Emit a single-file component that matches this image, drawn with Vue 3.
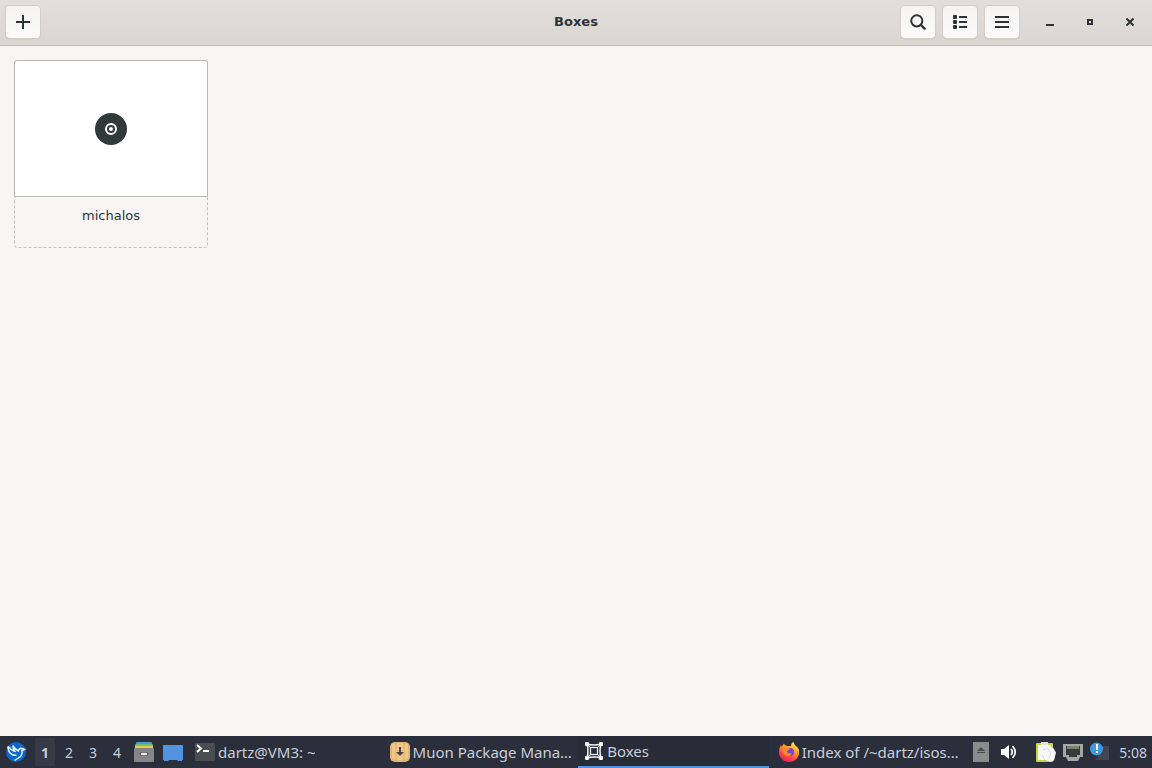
<script setup>
import { ref } from 'vue';

const activeDesktop = ref(1);
const activeTask = ref('boxes');

const tasks = [
    { id: 'terminal', title: 'dartz@VM3: ~' },
    { id: 'muon', title: 'Muon Package Mana…' },
    { id: 'boxes', title: 'Boxes' },
    { id: 'firefox', title: 'Index of /~dartz/isos…' },
];
</script>

<template>
    <div class="desktop">
        <header class="headerbar">
            <div class="side">
                <button class="tool" aria-label="New">
                    <svg width="16" height="16" viewBox="0 0 16 16">
                        <path d="M8 1v14M1 8h14" stroke="#2e3436" stroke-width="2" />
                    </svg>
                </button>
            </div>
            <h1>Boxes</h1>
            <div class="side end">
                <button class="tool" aria-label="Search">
                    <svg width="16" height="16" viewBox="0 0 16 16" fill="none" stroke="#2e3436">
                        <circle cx="6.8" cy="6.8" r="5.6" stroke-width="2" />
                        <path d="M11 11l3.6 3.6" stroke-width="2.4" stroke-linecap="round" />
                    </svg>
                </button>
                <button class="tool" aria-label="List view">
                    <svg width="16" height="16" viewBox="0 0 16 16" fill="#2e3436">
                        <rect x="1" y="1" width="4" height="4" rx="1" />
                        <rect x="1" y="6" width="4" height="4" rx="1" />
                        <rect x="1" y="11" width="4" height="4" rx="1" />
                        <path d="M7 2h8v2H7zM7 7h8v2H7zM7 12h8v2H7z" />
                    </svg>
                </button>
                <button class="tool" aria-label="Menu">
                    <svg width="16" height="16" viewBox="0 0 16 16" fill="#2e3436">
                        <path d="M1 2h14v2H1zM1 7h14v2H1zM1 12h14v2H1z" />
                    </svg>
                </button>
                <div class="window-controls">
                    <button aria-label="Minimize">
                        <svg width="16" height="16" viewBox="0 0 16 16" fill="#2e3436">
                            <path d="M4 10h8v2H4z" />
                        </svg>
                    </button>
                    <button aria-label="Maximize">
                        <svg width="16" height="16" viewBox="0 0 16 16" fill="none">
                            <rect x="6" y="6" width="4" height="4" stroke="#2e3436" stroke-width="2" />
                        </svg>
                    </button>
                    <button aria-label="Close">
                        <svg width="16" height="16" viewBox="0 0 16 16" fill="none">
                            <path d="M4.5 4.5l7 7M11.5 4.5l-7 7" stroke="#2e3436" stroke-width="2.1" />
                        </svg>
                    </button>
                </div>
            </div>
        </header>

        <main>
            <button class="machine">
                <span class="preview">
                    <svg width="32" height="32" viewBox="0 0 32 32">
                        <circle cx="16" cy="16" r="16" fill="#323a39" />
                        <circle cx="16" cy="16" r="5" fill="none" stroke="#fff" stroke-width="2" />
                        <circle cx="16" cy="16" r="2" fill="#fff" />
                    </svg>
                </span>
                <span class="name">michalos</span>
            </button>
        </main>

        <footer class="panel">
            <button class="start" aria-label="Applications">
                <svg width="22" height="22" viewBox="0 0 22 22">
                    <circle cx="11" cy="11" r="10" fill="#0b66cc" />
                    <path d="M3 5.5c2 2.5 4.500 4 7 5C8.500 9 8 7 8 5c1.500 2.500 3 4 5.500 5 .3-2 1.500-3 3.500-2.500l3 1-3 .8c.5 3.700-1 6.700-4.500 8.200l-3 2" fill="none" stroke="#e8f5ff" stroke-width="1.5" stroke-linejoin="round" />
                    <path d="M3 5.5c0 3.500 1.500 6.500 4 8 1.500.8 3 1 4.500.5" fill="none" stroke="#e8f5ff" stroke-width="1.5" />
                </svg>
            </button>
            <nav class="desktops">
                <button
                    v-for="n in 4"
                    :key="n"
                    :class="{ active: n == activeDesktop }"
                    @click="activeDesktop = n"
                >{{ n }}</button>
            </nav>
            <div class="launchers">
                <button aria-label="Files">
                    <svg width="20" height="20" viewBox="0 0 20 20">
                        <rect x="2" y="0" width="16" height="4" rx="1" fill="#4a9ad0" />
                        <rect x="1" y="2" width="18" height="4" rx="1" fill="#6cc074" />
                        <rect x="1" y="4" width="18" height="5" rx="1" fill="#f0c850" />
                        <rect x="0" y="6" width="20" height="14" rx="1" fill="#858585" />
                        <rect x="5" y="10" width="10" height="4" rx="2" fill="#707070" />
                        <rect x="7" y="11" width="6" height="2" fill="#fff" />
                    </svg>
                </button>
                <button aria-label="Show desktop">
                    <svg width="20" height="20" viewBox="0 0 20 20">
                        <path d="M0 3h20v15h-1v1h-4l-1-1H6l-1 1H1v-1H0z" fill="#5294e2" />
                    </svg>
                </button>
            </div>

            <div class="tasks">
                <button
                    v-for="task in tasks"
                    :key="task.id"
                    :class="{ active: task.id == activeTask }"
                    @click="activeTask = task.id"
                >
                    <svg v-if="task.id == 'terminal'" width="20" height="20" viewBox="0 0 20 20">
                        <rect y="1" width="20" height="18" rx="1" fill="#4b4d50" />
                        <path d="M2 3l4 3.5L2 10" fill="none" stroke="#fff" stroke-width="2" />
                        <path d="M8 8h6v2H8z" fill="#fff" />
                    </svg>
                    <svg v-else-if="task.id == 'muon'" width="20" height="20" viewBox="0 0 20 20">
                        <rect width="20" height="20" rx="5" fill="#e2b573" />
                        <rect x="2" y="1" width="16" height="17" rx="4" fill="#efc98c" />
                        <path d="M6 1v17M14 1v17" stroke="#dda962" />
                        <path d="M9 5h2v5h3l-4 4-4-4h3z" fill="#4c4036" />
                    </svg>
                    <svg v-else-if="task.id == 'boxes'" width="20" height="20" viewBox="0 0 20 20" fill="none" stroke="#f4f5f6">
                        <path d="M3 3q7 2 14 0q-2 7 0 14q-7-2-14 0q2-7 0-14z" stroke-width="1.5" />
                        <path d="M3 3l3 3M17 3l-3 3M3 17l3-3M17 17l-3-3" stroke-width="1.2" />
                        <rect x="6.5" y="6.5" width="7" height="7" stroke-width="1.2" />
                        <g fill="#f4f5f6" stroke="none">
                            <rect x="1" y="1" width="4" height="4" rx="1" />
                            <rect x="15" y="1" width="4" height="4" rx="1" />
                            <rect x="1" y="15" width="4" height="4" rx="1" />
                            <rect x="15" y="15" width="4" height="4" rx="1" />
                        </g>
                    </svg>
                    <svg v-else width="20" height="20" viewBox="0 0 20 20">
                        <defs>
                            <linearGradient id="flame" x1="0.8" y1="0" x2="0.3" y2="1">
                                <stop offset="0" stop-color="#fff04a" />
                                <stop offset="0.4" stop-color="#ff9a2c" />
                                <stop offset="0.75" stop-color="#ff4048" />
                                <stop offset="1" stop-color="#e42068" />
                            </linearGradient>
                        </defs>
                        <path d="M0 10C0 7 .8 5 2 3l.5 2L5 1.5C5.5 3 6.5 3.5 8 4l4 0c0-2 1-3.500 2.5-4 .3 2 1.500 3 3 4.500C19.5 6 21 9 20 12c-1 5-5 8-10 8S0 16 0 10z" fill="url(#flame)" />
                        <circle cx="11" cy="10" r="4" fill="#7446d0" />
                        <path d="M4 6c3-1.500 5-.5 7 1.500-1.500.2-2 .8-3 1.500 0 2 2 3 5 2-1 3-4 4-6.500 2.500S3.500 9 4 6z" fill="#ff8a2c" />
                    </svg>
                    <span>{{ task.title }}</span>
                </button>
            </div>

            <div class="tray">
                <button aria-label="Removable media">
                    <svg width="16" height="20" viewBox="0 0 16 20">
                        <rect width="16" height="20" fill="#8b8c8e" />
                        <path d="M4 9l4-4 4 4zM4 10h8v1H4z" fill="#494b4e" />
                    </svg>
                </button>
                <button class="volume" aria-label="Volume">
                    <svg width="16" height="16" viewBox="0 0 16 16">
                        <path d="M0 5h3l5-4v14l-5-4H0z" fill="#fff" />
                        <path d="M10 5q2.5 3 0 6M11.5 2q5.5 6 0 12" fill="none" stroke="#fff" stroke-width="1.7" />
                    </svg>
                </button>
                <button aria-label="Clipboard">
                    <svg width="20" height="20" viewBox="0 0 20 20">
                        <rect x="0" y="1" width="17" height="19" rx="1" fill="#c8d348" />
                        <rect x="2" y="3" width="13" height="15" fill="#f6f7ee" />
                        <rect x="5" y="0" width="7" height="3" fill="#e4e5da" />
                        <path d="M7 8l5-2 5-.5 3 5-2 8-4 1-6-2-2-5z" fill="#f8f8f8" />
                        <path d="M7 8l5-2M12 7l3 4-2 5M6 13l3 5" fill="none" stroke="#cfd0ce" stroke-width="0.8" />
                    </svg>
                </button>
                <button aria-label="Network">
                    <svg width="20" height="20" viewBox="0 0 20 20">
                        <path d="M0 2h20v13h-3l-2 4H5l-2-4H0z" fill="#a5a6a6" />
                        <path d="M3 4h14v9h-3v2H6v-2H3z" fill="#363a39" />
                        <path d="M5 4v3M7 4v3M9 4v3M11 4v3M13 4v3M15 4v3" stroke="#c4c3a0" />
                    </svg>
                </button>
                <button aria-label="Notifications">
                    <svg width="20" height="20" viewBox="0 0 20 20">
                        <path d="M8 4h11v14H5l3-3z" fill="#414650" />
                        <circle cx="6.5" cy="7" r="6.5" fill="#3d9ae0" />
                        <path d="M6 2h2v6H6zM6 9h2v2H6z" fill="#fff" />
                    </svg>
                </button>
                <time>5:08</time>
            </div>
        </footer>
    </div>
</template>

<style>
body {
    margin: 0;
}
</style>

<style scoped>
.desktop {
    min-height: 100vh;

    display: flex;
    flex-direction: column;

    background-color: #f6f5f4;
    color: #2e3436;
    font-family: "DejaVu Sans", sans-serif;
    font-size: 13px;
}

button {
    padding: 0;
    border: none;

    display: flex;
    align-items: center;
    justify-content: center;

    background: none;
    color: inherit;
    font: inherit;
}

svg {
    flex: none;
    display: block;
}

.headerbar {
    box-sizing: border-box;
    height: 46px;
    padding: 0 6px 2px;
    border-bottom: 1px solid #bfb8b1;

    display: flex;
    align-items: center;

    background: linear-gradient(to bottom, #e1dedb, #dad6d2);
}

.headerbar h1 {
    margin: 0;

    font-size: 13px;
    font-weight: bold;
}

.side {
    flex: 1 1 0;

    display: flex;
    align-items: center;
    gap: 8px;
}

.end {
    justify-content: flex-end;
}

.tool {
    box-sizing: border-box;
    width: 34px;
    height: 32px;
    border-radius: 4px;

    background: linear-gradient(to bottom, #f5f4f2, #fbfafa);
    box-shadow: 0 0 0 1px #d2cdc8, 0 1px 2px #0002;
}

.window-controls {
    padding-left: 3px;

    display: flex;
}

.window-controls button {
    width: 40px;
    height: 32px;
}

.window-controls button:last-child {
    width: 36px;
    padding-left: 4px;
}

main {
    flex: 1 1 auto;
    padding: 14px;

    display: flex;
    align-items: flex-start;
}

.machine {
    box-sizing: border-box;
    width: 194px;
    height: 188px;
    border: 1px dashed #c3c1bf;
    border-radius: 4px;

    flex-direction: column;
    justify-content: flex-start;
}

.preview {
    box-sizing: border-box;
    width: 194px;
    height: 137px;
    margin: -1px -1px 0;
    border: 1px solid #b9b8b6;
    border-radius: 3px 3px 0 0;

    display: flex;
    align-items: center;
    justify-content: center;

    background-color: #fff;
}

.name {
    padding-top: 11px;

    line-height: 16px;
}

.panel {
    height: 32px;
    padding: 0 5px;

    display: flex;
    align-items: stretch;

    background-color: #2b2f3b;
    color: #c9cdd8;
    font-family: "Noto Sans", sans-serif;
    font-size: 14px;
}

.desktops {
    padding: 0 5px 0 6px;

    display: flex;
}

.desktops button {
    width: 24px;
}

.desktops .active {
    padding: 2px;

    background-color: #363a46;
    background-clip: content-box;
    font-weight: bold;
}

.launchers {
    padding: 0 6px 0 0;

    display: flex;
    gap: 9px;
}

.tasks {
    flex: 1 1 0;
    min-width: 0;

    display: flex;
    gap: 4px;
}

.tasks button {
    flex: 1 1 0;
    min-width: 0;
    padding: 0 0 0 6px;

    gap: 3px;
    justify-content: flex-start;

    font-size: 15px;
}

.tasks .active {
    border-bottom: 2px solid #5294e2;

    background-color: #282c37;
}

.tasks span {
    overflow: hidden;
    text-overflow: ellipsis;
    white-space: nowrap;
}

.tray {
    padding-left: 10px;

    display: flex;
    align-items: center;
    gap: 7px;
}

.tray time {
    padding-left: 2px;
}

.volume {
    padding: 0 12px 0 5px;
}
</style>
